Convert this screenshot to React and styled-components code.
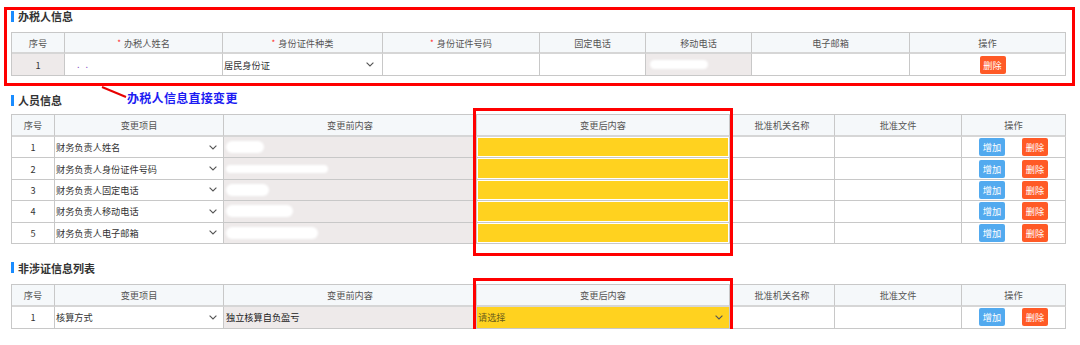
import React from "react";
import styled, { createGlobalStyle } from "styled-components";

const GlobalStyle = createGlobalStyle`
  body {
    margin: 0;
    background: #fff;
    font-family: "Noto Sans CJK SC", "Noto Sans", sans-serif;
  }
`;

const Page = styled.div`
  width: 1071px;
  padding: 7px 0 0 4px;
`;

const Section = styled.section`
  position: relative;
  padding: ${(p) => (p.$boxed ? "0 6px 7px 4px" : "0 9px 0 7px")};
  border: ${(p) => (p.$boxed ? "3px solid #f00" : "none")};
  margin-top: ${(p) => p.$top || 0}px;
`;

const TitleRow = styled.div`
  display: flex;
  align-items: flex-start;
  height: ${(p) => p.$h}px;
  margin-bottom: ${(p) => p.$gap}px;
`;

const Title = styled.h3`
  margin: 0;
  display: flex;
  align-items: center;
  gap: 4px;
  font-size: 11px;
  line-height: ${(p) => p.$h}px;
  font-weight: 700;
  color: #333;

  &::before {
    content: "";
    width: 3px;
    height: 11px;
    background: #1a8cff;
  }
`;

const Annotation = styled.span`
  position: relative;
  margin-left: 65px;
  font-size: 12px;
  line-height: 10px;
  font-weight: 700;
  letter-spacing: 0.3px;
  color: #1c1cf2;
`;

const Pointer = styled.svg`
  position: absolute;
  left: -26px;
  top: -8px;
`;

const TableWrap = styled.div`
  position: relative;
`;

const Table = styled.div`
  border-top: 1px solid #c8c8c8;
  border-left: 1px solid #c8c8c8;
`;

const Row = styled.div`
  display: grid;
  grid-template-columns: ${(p) => p.$cols};
  height: ${(p) => p.$h}px;
`;

const Cell = styled.div`
  display: flex;
  align-items: center;
  justify-content: ${(p) => (p.$left ? "flex-start" : "center")};
  gap: ${(p) => p.$gap || 0}px;
  min-width: 0;
  overflow: hidden;
  padding: ${(p) => p.$pad || "0"};
  border-right: 1px solid #c8c8c8;
  border-bottom: 1px solid #c8c8c8;
  background: ${(p) => p.$bg || "#fff"};
  font-size: 9.2px;
  color: ${(p) => p.$color || "#333"};
  white-space: nowrap;
`;

const HeadCell = styled(Cell)`
  background: #f5f8fa;
  color: #555;
  border-bottom: 2px solid #d6d6d6;
`;

const Star = styled.span`
  color: #f22;
  margin-right: 3px;
  font-size: 8px;
`;

const Select = styled.div`
  flex: 1;
  display: flex;
  align-items: center;
  justify-content: space-between;
  height: 100%;
  padding: 0 ${(p) => p.$right || 6}px 0 1px;
  background: ${(p) => p.$bg || "transparent"};
  color: ${(p) => p.$color || "#333"};
`;

const YellowInput = styled.div`
  flex: 1;
  height: 100%;
  background: #ffd21f;
`;

const Blob = styled.span`
  display: inline-block;
  width: ${(p) => p.$w}px;
  height: ${(p) => p.$h || 11}px;
  margin-left: ${(p) => p.$ml || 0}px;
  border-radius: 6px;
  background: #fff;
  filter: blur(1px);
  flex-shrink: 0;
`;

const Dots = styled.span`
  color: #8a5cc8;
  font-size: 9px;
  letter-spacing: 6px;
  margin-left: 4px;
`;

const Btn = styled.button`
  width: 26px;
  height: 18px;
  padding: 0;
  border: none;
  border-radius: 2px;
  background: ${(p) => (p.$danger ? "#ff5a26" : "#52aaef")};
  color: #fff;
  font-family: inherit;
  font-size: 9.2px;
`;

const Actions = styled(Cell)`
  justify-content: ${(p) => p.$single ? "center" : "space-evenly"};
  padding-left: ${(p) => (p.$single ? "10px" : "0")};
`;

const Highlight = styled.div`
  position: absolute;
  left: 462px;
  width: 260px;
  top: -6px;
  bottom: ${(p) => p.$below}px;
  border: 3px solid #f00;
  box-sizing: border-box;
  pointer-events: none;
`;

const Chevron = () => (
  <svg width="8" height="5" viewBox="0 0 8 5">
    <polyline points="0.6,0.6 4,4 7.4,0.6" fill="none" stroke="#555" strokeWidth="1.1" />
  </svg>
);

const COLS1 = "53px 158px 160px 157px 106px 106px 158px 156px";
const COLS2 = "43px 169px 253px 253px 105px 127px 104px";

const staffRows = [
  { item: "财务负责人姓名", blob: 38 },
  { item: "财务负责人身份证件号码", blob: 102, thin: true },
  { item: "财务负责人固定电话", blob: 43 },
  { item: "财务负责人移动电话", blob: 67 },
  { item: "财务负责人电子邮箱", blob: 92 },
];

const ChangeHead = () => (
  <Row $cols={COLS2} $h={22}>
    <HeadCell>序号</HeadCell>
    <HeadCell>变更项目</HeadCell>
    <HeadCell>变更前内容</HeadCell>
    <HeadCell>变更后内容</HeadCell>
    <HeadCell>批准机关名称</HeadCell>
    <HeadCell>批准文件</HeadCell>
    <HeadCell>操作</HeadCell>
  </Row>
);

const ActionButtons = () => (
  <Actions>
    <Btn>增加</Btn>
    <Btn $danger>删除</Btn>
  </Actions>
);

export default function App() {
  return (
    <Page>
      <GlobalStyle />

      {/* 办税人信息 */}
      <Section $boxed>
        <TitleRow $h={12} $gap={10}>
          <Title $h={12}>办税人信息</Title>
        </TitleRow>
        <Table>
          <Row $cols={COLS1} $h={21}>
            <HeadCell>序号</HeadCell>
            <HeadCell><Star>*</Star>办税人姓名</HeadCell>
            <HeadCell><Star>*</Star>身份证件种类</HeadCell>
            <HeadCell><Star>*</Star>身份证件号码</HeadCell>
            <HeadCell>固定电话</HeadCell>
            <HeadCell>移动电话</HeadCell>
            <HeadCell>电子邮箱</HeadCell>
            <HeadCell>操作</HeadCell>
          </Row>
          <Row $cols={COLS1} $h={22}>
            <Cell $bg="#eeeaea">1</Cell>
            <Cell $left>
              <Blob $w={8} $h={10} />
              <Dots>..</Dots>
            </Cell>
            <Cell $left>
              <Select $right={8}>
                居民身份证
                <Chevron />
              </Select>
            </Cell>
            <Cell $left $pad="0 0 0 2px">
              <Blob $w={42} $h={16} />
            </Cell>
            <Cell />
            <Cell $left $bg="#eeeaea" $pad="0 0 0 4px">
              <Blob $w={58} $h={9} />
            </Cell>
            <Cell />
            <Actions $single>
              <Btn $danger>删除</Btn>
            </Actions>
          </Row>
        </Table>
      </Section>

      {/* 人员信息 */}
      <Section $top={7}>
        <TitleRow $h={14} $gap={7}>
          <Title $h={14}>人员信息</Title>
          <Annotation>
            <Pointer width="26" height="18" viewBox="0 0 26 18">
              <line x1="1" y1="2" x2="25" y2="12" stroke="#e80000" strokeWidth="2" />
            </Pointer>
            办税人信息直接变更
          </Annotation>
        </TitleRow>
        <TableWrap>
          <Table>
            <ChangeHead />
            {staffRows.map((r, i) => (
              <Row key={r.item} $cols={COLS2} $h={21.4}>
                <Cell>{i + 1}</Cell>
                <Cell $left>
                  <Select>
                    {r.item}
                    <Chevron />
                  </Select>
                </Cell>
                <Cell $left $bg="#eeeaea" $pad="0 0 0 2px">
                  <Blob $w={r.blob} $h={r.thin ? 8 : 12} />
                </Cell>
                <Cell $pad="1px 1px 1px 1px">
                  <YellowInput />
                </Cell>
                <Cell />
                <Cell />
                <ActionButtons />
              </Row>
            ))}
          </Table>
          <Highlight $below={-12} />
        </TableWrap>
      </Section>

      {/* 非涉证信息列表 */}
      <Section $top={17}>
        <TitleRow $h={14} $gap={9}>
          <Title $h={14}>非涉证信息列表</Title>
        </TitleRow>
        <TableWrap>
          <Table>
            <ChangeHead />
            <Row $cols={COLS2} $h={22}>
              <Cell>1</Cell>
              <Cell $left>
                <Select>
                  核算方式
                  <Chevron />
                </Select>
              </Cell>
              <Cell $left $bg="#eeeaea" $pad="0 0 0 2px" $color="#222">
                独立核算自负盈亏
              </Cell>
              <Cell $left>
                <Select $bg="#ffd21f" $color="#6b5a1a" $right={6}>
                  请选择
                  <Chevron />
                </Select>
              </Cell>
              <Cell />
              <Cell />
              <ActionButtons />
            </Row>
          </Table>
          <Highlight $below={-5} />
        </TableWrap>
      </Section>
    </Page>
  );
}
